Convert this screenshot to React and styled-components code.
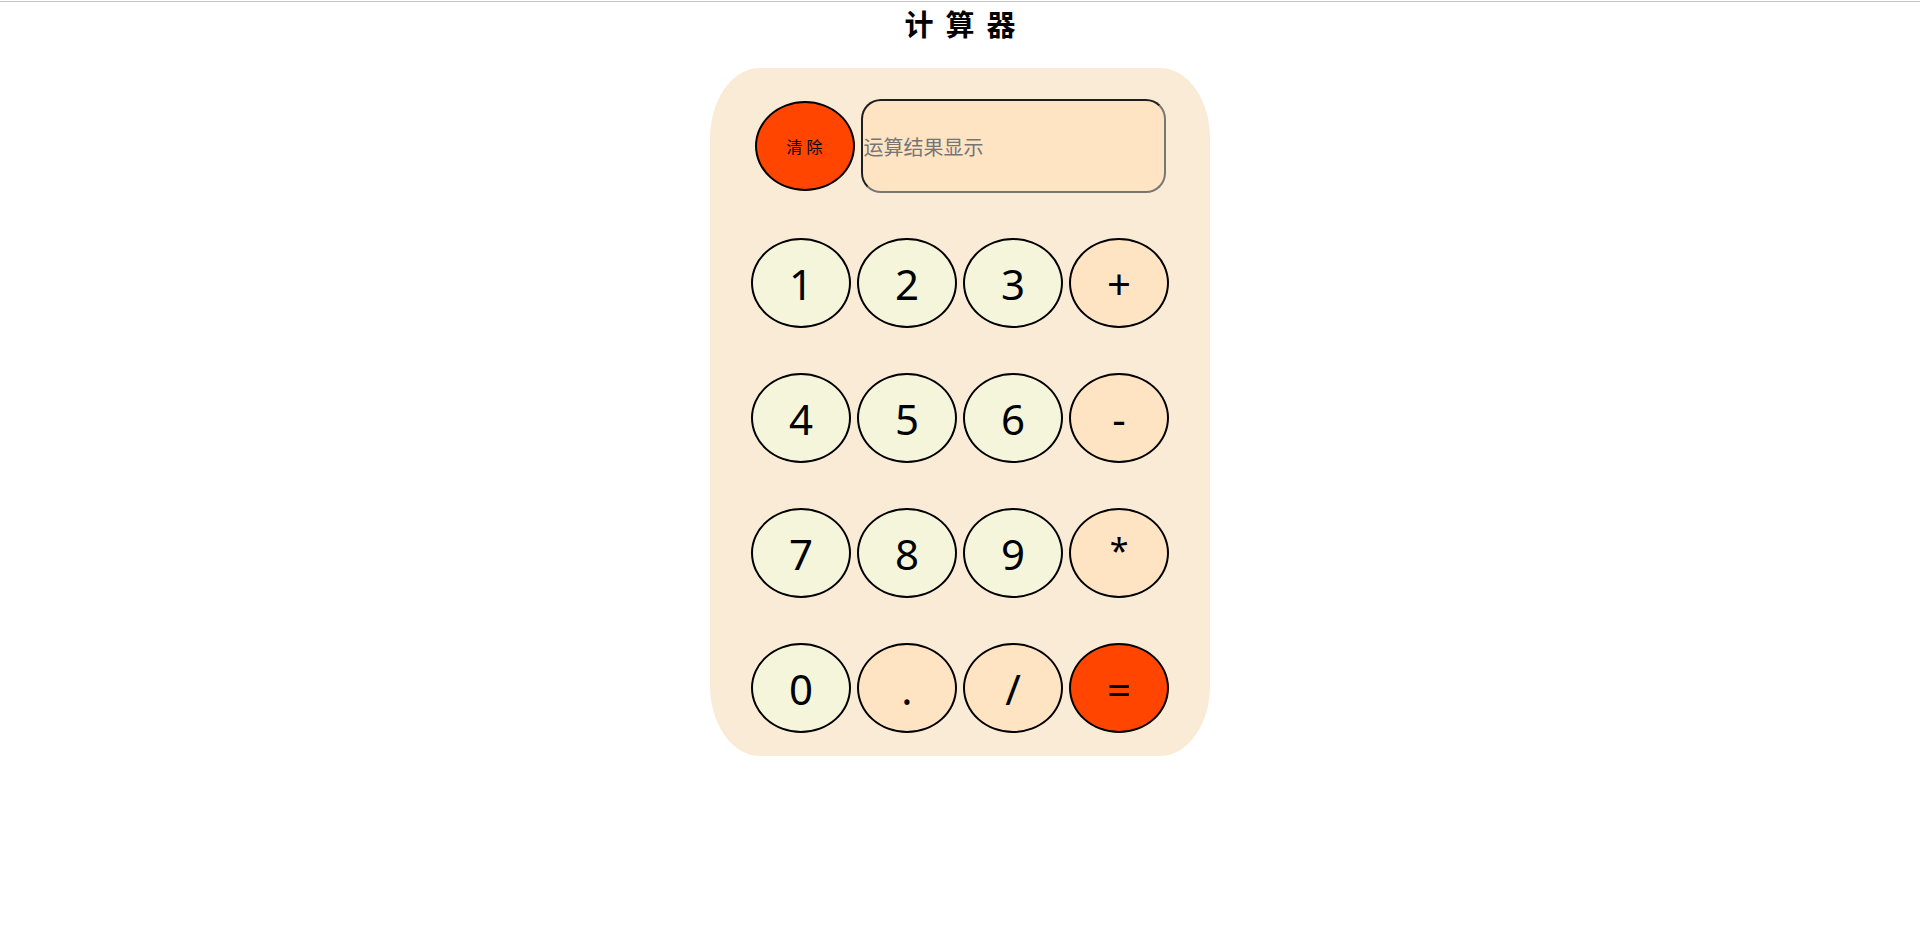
import React, { useState } from "react";
import styled, { createGlobalStyle } from "styled-components";

const keys = [
  ["1", "2", "3", "+"],
  ["4", "5", "6", "-"],
  ["7", "8", "9", "*"],
  ["0", ".", "/", "="],
];

const kindOf = (k) => {
  if (k === "=") return "equal";
  if (/[0-9]/.test(k)) return "num";
  return "op";
};

const Calculator = () => {
  const [expr, setExpr] = useState("");

  const press = (k) => {
    if (k === "=") {
      try {
        // eslint-disable-next-line no-new-func
        const res = Function(`"use strict"; return (${expr})`)();
        setExpr(String(res));
      } catch (e) {
        setExpr("");
      }
      return;
    }
    setExpr(expr + k);
  };

  return (
    <Page>
      <GlobalStyle />
      <TopRule />
      <Title>计算器</Title>
      <Panel>
        <ClearRow>
          <Key $kind="equal" $small onClick={() => setExpr("")}>
            清 除
          </Key>
          <Display
            type="text"
            placeholder="运算结果显示"
            value={expr}
            readOnly
          />
        </ClearRow>
        {keys.map((row, i) => (
          <KeyRow key={i}>
            {row.map((k) => (
              <Key key={k} $kind={kindOf(k)} onClick={() => press(k)}>
                {k === "*" ? <Star>*</Star> : k}
              </Key>
            ))}
          </KeyRow>
        ))}
      </Panel>
    </Page>
  );
};

// styled components

const GlobalStyle = createGlobalStyle`
  html, body {
    margin: 0;
    padding: 0;
    background: #ffffff;
  }
  body {
    font-family: "Noto Sans", "Noto Sans CJK SC", sans-serif;
  }
`;

const Page = styled.div`
  display: flex;
  flex-direction: column;
  align-items: center;
  width: 100%;
  min-height: 942px;
`;

const TopRule = styled.div`
  width: 100%;
  height: 0;
  margin-top: 1px;
  border-top: 1px solid #c4c4c4;
`;

const Title = styled.h2`
  margin: 0;
  height: 46px;
  line-height: 42px;
  font-size: 29px;
  font-weight: 700;
  letter-spacing: 12px;
  padding-left: 12px;
  color: #000;
  font-family: "Noto Sans CJK SC", sans-serif;
`;

const Panel = styled.div`
  box-sizing: border-box;
  width: 500px;
  height: 688px;
  margin-top: 20px;
  padding-top: 31px;
  display: flex;
  flex-direction: column;
  align-items: center;
  gap: 45px;
  background: #faebd7;
  border-radius: 50px / 70px;
`;

const ClearRow = styled.div`
  display: flex;
  align-items: center;
  gap: 6px;
`;

const KeyRow = styled.div`
  display: flex;
  gap: 6px;
`;

const Key = styled.button`
  box-sizing: border-box;
  width: 100px;
  height: 90px;
  padding: 0;
  border: 2px solid #000;
  border-radius: 50%;
  display: flex;
  align-items: center;
  justify-content: center;
  color: #000;
  cursor: pointer;
  font-family: "Noto Sans", "Noto Sans CJK SC", sans-serif;
  font-size: ${(p) => (p.$small ? "16px" : "42px")};
  background: ${(p) =>
    p.$kind === "equal" ? "#ff4500" : p.$kind === "num" ? "#f5f5dc" : "#ffe4c4"};
`;

const Star = styled.span`
  font-size: 34px;
  position: relative;
  top: -3px;
`;

const Display = styled.input`
  box-sizing: border-box;
  width: 305px;
  height: 94px;
  padding: 0 1px;
  border: 2px solid;
  border-color: #1e1e1e #767676 #767676 #1e1e1e;
  border-radius: 20px;
  background: #ffe4c4;
  font-size: 20px;
  font-family: "Noto Sans CJK SC", sans-serif;
  color: #000;
  outline: none;
  &::placeholder {
    color: #757575;
  }
`;

export default Calculator;
